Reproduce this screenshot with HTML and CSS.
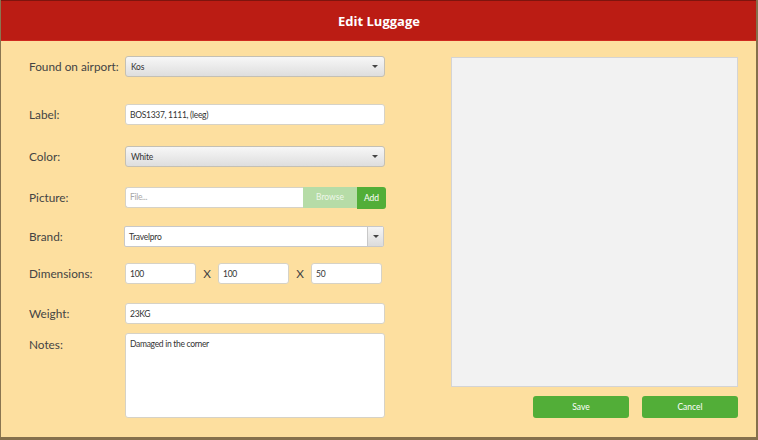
FILE: index.html
```html
<!DOCTYPE html>
<html>
<head>
<meta charset="utf-8">
<link rel="stylesheet" href="styles.css">
</head>
<body>
<div class="window">
  <div class="header">Edit Luggage</div>
  <div class="content">
    <div class="form">
      <div class="row r1">
        <div class="label">Found on airport:</div>
        <div class="select"><span>Kos</span><span class="caret"></span></div>
      </div>
      <div class="row r2">
        <div class="label">Label:</div>
        <div class="input wide">BOS1337, 1111, (leeg)</div>
      </div>
      <div class="row r3">
        <div class="label">Color:</div>
        <div class="select"><span>White</span><span class="caret"></span></div>
      </div>
      <div class="row r4">
        <div class="label">Picture:</div>
        <div class="filegroup">
          <div class="input file placeholder">File...</div>
          <div class="btn browse">Browse</div>
          <div class="btn add">Add</div>
        </div>
      </div>
      <div class="row r5">
        <div class="label">Brand:</div>
        <div class="combo"><span class="combo-text">Travelpro</span><span class="combo-btn"><span class="caret"></span></span></div>
      </div>
      <div class="row r6">
        <div class="label">Dimensions:</div>
        <div class="dims">
          <div class="input dim">100</div>
          <span class="x">X</span>
          <div class="input dim">100</div>
          <span class="x">X</span>
          <div class="input dim">50</div>
        </div>
      </div>
      <div class="row r7">
        <div class="label">Weight:</div>
        <div class="input wide">23KG</div>
      </div>
      <div class="row r8 notes-row">
        <div class="label">Notes:</div>
        <div class="input textarea">Damaged in the corner</div>
      </div>
    </div>
    <div class="side">
      <div class="preview"></div>
      <div class="actions">
        <div class="btn big">Save</div>
        <div class="btn big">Cancel</div>
      </div>
    </div>
  </div>
</div>
</body>
</html>
```

FILE: styles.css
```css
* { box-sizing: border-box; }
html, body { margin: 0; padding: 0; }
body {
  width: 758px;
  height: 440px;
  background: #85704c;
  font-family: "Lato", "Open Sans", sans-serif;
  overflow: hidden;
}
.window {
  width: 756px;
  height: 437px;
  background: #fddf9f;
  border-left: 1px solid #8a7550;
  display: flex;
  flex-direction: column;
}
.header {
  height: 41px;
  background: #bb1c14;
  border-top: 1px solid #7e140e;
  border-bottom: 1px solid #cf2a1e;
  color: #fff;
  font-family: "Open Sans", sans-serif;
  font-weight: 700;
  font-size: 13px;
  display: flex;
  align-items: center;
  justify-content: center;
  padding-left: 1px;
}
.content {
  display: flex;
  flex: 1;
}
.form {
  width: 386px;
  padding-left: 28px;
  display: flex;
  flex-direction: column;
}
.row {
  display: flex;
  align-items: center;
  height: 21px;
}
.r1 { margin-top: 15px; }
.r2 { margin-top: 27px; }
.r3 { margin-top: 21px; }
.r4 { margin-top: 20px; }
.r5 { margin-top: 18px; }
.r6 { margin-top: 16px; }
.r7 { margin-top: 19px; }
.r8 { margin-top: 9px; }
.notes-row { align-items: flex-start; height: 85px; }
.notes-row .label { margin-top: 4px; }
.label {
  width: 96px;
  flex: none;
  font-size: 11.8px;
  color: #444;
  white-space: nowrap;
}
.select {
  width: 260px;
  height: 21px;
  border: 1px solid #c4c0b4;
  border-radius: 3px;
  background: linear-gradient(#f7f7f7, #dedede);
  display: flex;
  align-items: center;
  justify-content: space-between;
  padding: 0 6px 0 5px;
  font-size: 8.5px;
  letter-spacing: -0.2px;
  color: #333;
}
.caret {
  width: 0;
  height: 0;
  border-left: 3px solid transparent;
  border-right: 3px solid transparent;
  border-top: 3px solid #444;
}
.input {
  height: 21px;
  background: #fff;
  border: 1px solid #d6d2c6;
  border-radius: 3px;
  font-size: 8.5px;
  letter-spacing: -0.3px;
  color: #333;
  display: flex;
  align-items: center;
  padding: 0 4px;
}
.wide { width: 260px; }
.filegroup { display: flex; width: 261px; }
.file {
  width: 178px;
  border-radius: 3px 0 0 3px;
  border-right: none;
}
.placeholder { color: #a8a8a8; }
.btn {
  display: flex;
  align-items: center;
  justify-content: center;
  color: #fff;
  font-size: 8.5px;
  background: #52ae38;
  border-radius: 3px;
}
.browse {
  width: 54px;
  height: 21px;
  background: #b6dca7;
  border-radius: 0;
  color: #eef7ea;
}
.add {
  width: 29px;
  height: 22px;
  border-radius: 0 3px 3px 0;
}
.combo {
  width: 260px;
  height: 21px;
  margin-left: -1px;
  border: 1px solid #c8c8c8;
  border-radius: 2px;
  background: #fff;
  display: flex;
}
.combo-text {
  flex: 1;
  display: flex;
  align-items: center;
  padding-left: 4px;
  font-size: 8.5px;
  letter-spacing: -0.2px;
  color: #333;
}
.combo-btn {
  width: 16px;
  border-left: 1px solid #c8c8c8;
  background: linear-gradient(#f5f5f5, #dcdcdc);
  display: flex;
  align-items: center;
  justify-content: center;
}
.dims { display: flex; align-items: center; }
.dim { width: 71px; }
.x {
  width: 22px;
  text-align: center;
  font-size: 11.8px;
  color: #444;
}
.textarea {
  width: 260px;
  height: 85px;
  align-items: flex-start;
  padding-top: 5px;
}
.side {
  margin-left: 64px;
  width: 287px;
  display: flex;
  flex-direction: column;
}
.preview {
  margin-top: 16px;
  height: 330px;
  background: #f2f2f2;
  border: 1px solid #d4d4d4;
}
.actions {
  display: flex;
  justify-content: flex-end;
  gap: 13px;
  margin-top: 9px;
}
.big { width: 96px; height: 22px; }
```
